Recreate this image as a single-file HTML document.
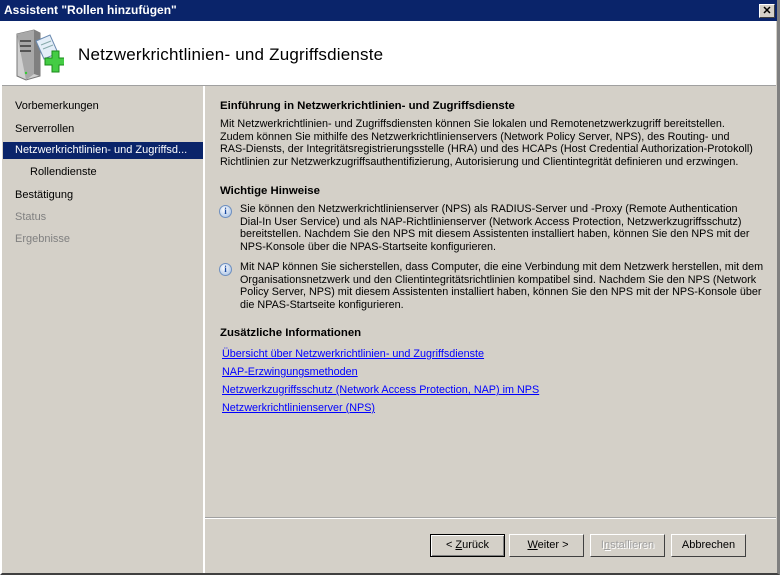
<!DOCTYPE html>
<html><head><meta charset="utf-8"><style>
*{margin:0;padding:0;box-sizing:border-box}
body{width:780px;height:575px;overflow:hidden;background:#d4d0c8;font-family:"Liberation Sans",sans-serif;font-size:11px;color:#000;position:relative}
.abs{position:absolute}
#win{left:0;top:0;width:780px;height:575px;border-right:3px solid #808080;border-bottom:2px solid #404040;border-left:2px solid #fff}
#title{left:0;top:0;width:777px;height:21px;background:#0a246a;color:#fff;font-weight:bold;font-size:12px;padding:3px 0 0 4px}
#close{left:759px;top:4px;width:16px;height:14px;background:#d4d0c8;border:1px solid;border-color:#fff #404040 #404040 #fff;color:#000;font:bold 11px "Liberation Sans",sans-serif;text-align:center;line-height:12px}
#hdr{left:2px;top:21px;width:774px;height:64px;background:#fff}
#hdr h1{position:absolute;left:76px;top:24px;font:normal 17px "Liberation Sans",sans-serif;letter-spacing:0.2px}
#sep{left:203px;top:86px;width:2px;height:487px;background:#fff}
.nav{position:absolute;left:15px}
.sel{left:3px;top:142px;width:200px;height:17px;background:#0a246a}
h2{position:absolute;left:220px;font-size:11.4px;font-weight:bold}
.t{position:absolute;font-size:10.8px;line-height:12.5px}
a{color:#00f;text-decoration:underline;position:absolute;left:222px;font-size:10.8px}
.btn{position:absolute;top:534px;width:75px;height:23px;border:1px solid;border-color:#fff #404040 #404040 #fff;text-align:center;line-height:21px;font-size:11px}
.info{position:absolute;left:219px;width:13px;height:13px;border-radius:50%;background:radial-gradient(circle at 40% 35%,#fff,#9bb8e0);border:1px solid #6d8fc0;color:#1a4aa0;font:bold 9px serif;text-align:center;line-height:11px}
</style></head><body>
<div id="win" class="abs"></div>
<div id="title" class="abs">Assistent "Rollen hinzufügen"</div>
<div id="close" class="abs">✕</div>
<div id="hdr" class="abs">
<svg class="abs" style="left:12px;top:8px" width="50" height="52">
<polygon points="3,5 20,1 26,4 26,47 12,51 3,47" fill="#d0d0d0" stroke="#777"/>
<polygon points="3,5 20,1 20,45 12,51" fill="#a8a8a8"/>
<polygon points="20,1 26,4 26,47 20,45" fill="#808080"/>
<rect x="6" y="11" width="11" height="2" fill="#555"/><rect x="6" y="16" width="11" height="2" fill="#555"/><rect x="6" y="21" width="11" height="2" fill="#555"/>
<circle cx="12" cy="44" r="1.2" fill="#3c3"/>
<polygon points="22,12 36,6 44,24 30,30" fill="#e4eef8" stroke="#6a8ab0"/>
<line x1="27" y1="16" x2="37" y2="12" stroke="#8aa"/><line x1="29" y1="20" x2="39" y2="16" stroke="#8aa"/>
<path d="M31 29h7v-7h7v7h7v7h-7v7h-7v-7h-7z" fill="#44cc44" stroke="#1a8a1a"/>
</svg>
<h1>Netzwerkrichtlinien- und Zugriffsdienste</h1></div>
<div class="abs" style="left:2px;top:85px;width:774px;height:1px;background:#a0a0a0"></div>
<div id="sep" class="abs"></div>
<div class="abs sel"></div>
<div class="nav" style="top:100px">Vorbemerkungen</div>
<div class="nav" style="top:123px">Serverrollen</div>
<div class="nav" style="top:144px;color:#fff">Netzwerkrichtlinien- und Zugriffsd...</div>
<div class="nav" style="top:166px;left:30px">Rollendienste</div>
<div class="nav" style="top:189px">Bestätigung</div>
<div class="nav" style="top:211px;color:#808080">Status</div>
<div class="nav" style="top:233px;color:#808080">Ergebnisse</div>
<h2 style="top:100px">Einführung in Netzwerkrichtlinien- und Zugriffsdienste</h2>
<div class="t" style="left:220px;top:118px">Mit Netzwerkrichtlinien- und Zugriffsdiensten können Sie lokalen und Remotenetzwerkzugriff bereitstellen.<br>Zudem können Sie mithilfe des Netzwerkrichtlinienservers (Network Policy Server, NPS), des Routing- und<br>RAS-Diensts, der Integritätsregistrierungsstelle (HRA) und des HCAPs (Host Credential Authorization-Protokoll)<br>Richtlinien zur Netzwerkzugriffsauthentifizierung, Autorisierung und Clientintegrität definieren und erzwingen.</div>
<h2 style="top:185px">Wichtige Hinweise</h2>
<div class="info" style="top:205px">i</div>
<div class="t" style="left:240px;top:203px">Sie können den Netzwerkrichtlinienserver (NPS) als RADIUS-Server und -Proxy (Remote Authentication<br>Dial-In User Service) und als NAP-Richtlinienserver (Network Access Protection, Netzwerkzugriffsschutz)<br>bereitstellen. Nachdem Sie den NPS mit diesem Assistenten installiert haben, können Sie den NPS mit der<br>NPS-Konsole über die NPAS-Startseite konfigurieren.</div>
<div class="info" style="top:263px">i</div>
<div class="t" style="left:240px;top:261px">Mit NAP können Sie sicherstellen, dass Computer, die eine Verbindung mit dem Netzwerk herstellen, mit dem<br>Organisationsnetzwerk und den Clientintegritätsrichtlinien kompatibel sind. Nachdem Sie den NPS (Network<br>Policy Server, NPS) mit diesem Assistenten installiert haben, können Sie den NPS mit der NPS-Konsole über<br>die NPAS-Startseite konfigurieren.</div>
<h2 style="top:327px">Zusätzliche Informationen</h2>
<a style="top:348px">Übersicht über Netzwerkrichtlinien- und Zugriffsdienste</a>
<a style="top:366px">NAP-Erzwingungsmethoden</a>
<a style="top:384px">Netzwerkzugriffsschutz (Network Access Protection, NAP) im NPS</a>
<a style="top:402px">Netzwerkrichtlinienserver (NPS)</a>
<div class="abs" style="left:205px;top:517px;width:571px;height:1px;background:#a0a0a0"></div>
<div class="abs" style="left:205px;top:518px;width:571px;height:1px;background:#fff"></div>
<div class="btn" style="left:430px;border:1px solid #000;box-shadow:inset 1px 1px #fff,inset -1px -1px #808080">&lt; <u>Z</u>urück</div>
<div class="btn" style="left:509px">&nbsp;<u>W</u>eiter &gt;</div>
<div class="btn" style="left:590px;color:#a0a0a0;text-shadow:1px 1px #fff">I<u>n</u>stallieren</div>
<div class="btn" style="left:671px">Abbrechen</div>
</body></html>
